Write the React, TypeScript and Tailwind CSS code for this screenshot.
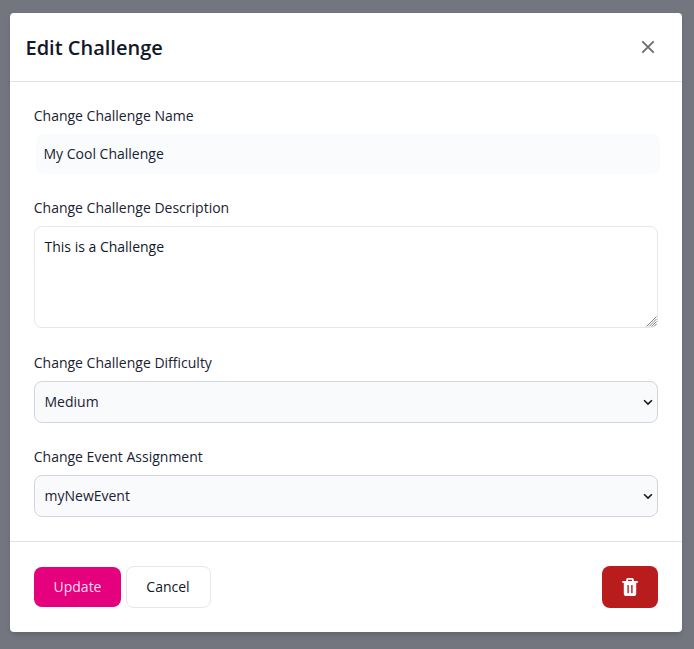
import React from "react";

function Label({ children }: { children: React.ReactNode }) {
  return <label className="-ml-[0.25px] block h-5 text-sm leading-5 text-[#1a2332]">{children}</label>;
}

function Select({ value }: { value: string }) {
  return (
    <div className="mt-2 flex h-[42px] items-center justify-between rounded-lg border border-[#d1d5db] bg-[#f9fafc] pr-1 pl-[9.5px] text-sm text-[#1a2332]">
      <span>{value}</span>
      <svg width="10" height="10" viewBox="0 0 10 10" fill="none" stroke="#15171c" strokeWidth="1.6">
        <path d="M1.1 3.2L5 7.1l3.9-3.9" />
      </svg>
    </div>
  );
}

export default function App() {
  return (
    <div className="h-[649px] w-[694px] bg-[#73767e] px-[10px] pt-[13px] font-['Open_Sans',sans-serif] text-[#111827]">
      <div className="flex h-[619px] w-[672px] flex-col rounded bg-white shadow-md">
        <header className="flex h-[69px] items-center justify-between border-b border-[#e0e2e6] pr-6 pl-[15.5px]">
          <h1 className="pt-0.5 text-xl leading-7 font-semibold">Edit Challenge</h1>
          <button aria-label="Close" className="flex size-5 items-center justify-center text-[#6c6e73]">
            <svg width="20" height="20" viewBox="0 0 20 20" fill="none" stroke="currentColor" strokeWidth="1.9">
              <path d="M4.3 4.3l11.4 11.4M15.7 4.3L4.3 15.7" />
            </svg>
          </button>
        </header>
        <main className="flex h-[459px] flex-col px-6 pt-6">
          <Label>Change Challenge Name</Label>
          <input className="mt-2 -mr-[2px] ml-[2px] h-10 rounded-lg bg-[#f9fbfd] px-[7.5px] pb-[2px] text-sm text-[#1a2332]" defaultValue="My Cool Challenge" />
          <div className="mt-6"><Label>Change Challenge Description</Label></div>
          <div className="relative mt-2 h-[102px] shrink-0">
            <textarea className="block h-full w-full resize-none rounded-lg border border-[#e5e7eb] py-[10px] pr-[10px] pl-[9.5px] text-sm leading-5" defaultValue="This is a Challenge" />
            <svg className="pointer-events-none absolute right-[1px] bottom-[1px]" width="11" height="11" viewBox="0 0 11 11" fill="none" stroke="#777" strokeWidth="0.9">
              <path d="M0.5 10.5l10-10M3 10.5L10.5 3M5.5 10.5l5-5M8 10.5L10.5 8" />
            </svg>
          </div>
          <div className="mt-[25px]"><Label>Change Challenge Difficulty</Label><Select value="Medium" /></div>
          <div className="mt-6"><Label>Change Event Assignment</Label><Select value="myNewEvent" /></div>
        </main>
        <footer className="flex h-[91px] items-center border-t border-[#e0e2e6] px-6">
          <button className="h-10 w-[87px] rounded-lg bg-[#e5007d] text-sm text-[#ffdcef]">Update</button>
          <button className="ml-[5px] h-[42px] w-[85px] rounded-lg border border-[#e5e7eb] pr-[1px] text-sm">Cancel</button>
          <button aria-label="Delete" className="ml-auto flex h-[42px] w-14 items-center justify-center rounded-lg bg-[#b91c1c] text-white">
            <svg width="16" height="20" viewBox="0 0 16 20" fill="currentColor">
              <path fillRule="evenodd" d="M0.3 3.9h3.9V2.7Q4.2 0.9 5.9 0.9h4.2q1.7 0 1.7 1.8v1.2h3.9v2.2H0.3zM6 3.9h4V2.7H6zM1.8 6h12.4v11.1q0 2-2 2H3.8q-2 0-2-2zM5.4 8v8.2h1.4V8zM9.2 8v8.2h1.4V8z" />
            </svg>
          </button>
        </footer>
      </div>
    </div>
  );
}
